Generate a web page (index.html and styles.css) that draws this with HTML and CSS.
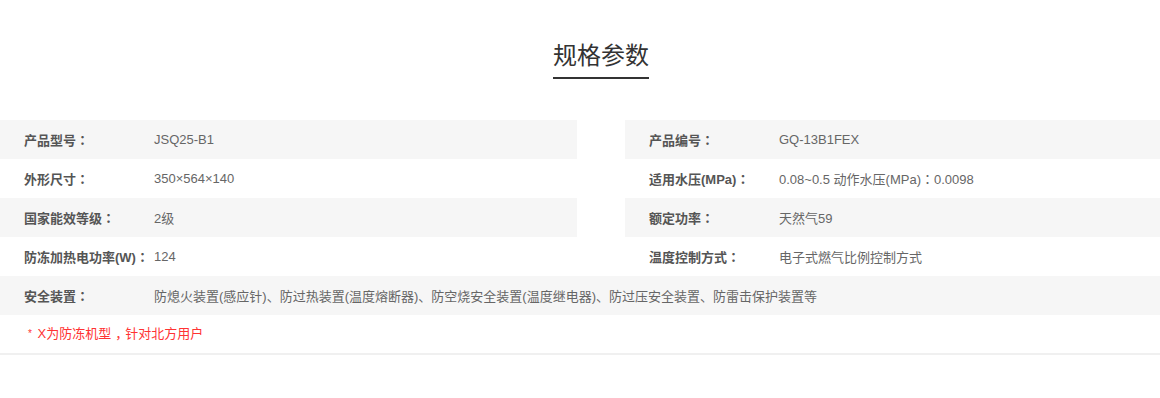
FILE: index.html
```html
<!DOCTYPE html>
<html lang="zh-CN">
<head>
    <meta charset="UTF-8">
    <meta name="viewport" content="width=device-width, initial-scale=1.0">
    <title>规格参数</title>
    <link rel="stylesheet" href="styles.css">
</head>
<body>
    <div class="spec">
        <div class="spec-head">
            <h2 class="spec-title">规格参数</h2>
        </div>

        <!-- 参数表 -->
        <div class="spec-table">
            <div class="spec-row shade">
                <div class="spec-cell left"><span class="label">产品型号<i class="p" lang="zh-TW">：</i></span><span class="value">JSQ25-B1</span></div>
                <div class="spec-cell right"><span class="label">产品编号<i class="p" lang="zh-TW">：</i></span><span class="value">GQ-13B1FEX</span></div>
            </div>
            <div class="spec-row">
                <div class="spec-cell left"><span class="label">外形尺寸<i class="p" lang="zh-TW">：</i></span><span class="value">350×564×140</span></div>
                <div class="spec-cell right"><span class="label">适用水压(MPa)<i class="p" lang="zh-TW">：</i></span><span class="value">0.08~0.5 动作水压(MPa)<i class="p" lang="zh-TW">：</i>0.0098</span></div>
            </div>
            <div class="spec-row shade">
                <div class="spec-cell left"><span class="label">国家能效等级<i class="p" lang="zh-TW">：</i></span><span class="value">2级</span></div>
                <div class="spec-cell right"><span class="label">额定功率<i class="p" lang="zh-TW">：</i></span><span class="value">天然气59</span></div>
            </div>
            <div class="spec-row">
                <div class="spec-cell left"><span class="label">防冻加热电功率(W)<i class="p" lang="zh-TW">：</i></span><span class="value">124</span></div>
                <div class="spec-cell right"><span class="label">温度控制方式<i class="p" lang="zh-TW">：</i></span><span class="value">电子式燃气比例控制方式</span></div>
            </div>
            <div class="spec-row shade">
                <div class="spec-cell full"><span class="label">安全装置<i class="p" lang="zh-TW">：</i></span><span class="value">防熄火装置(感应针)、防过热装置(温度熔断器)、防空烧安全装置(温度继电器)、防过压安全装置、防雷击保护装置等</span></div>
            </div>
        </div>

        <p class="spec-note"><span class="star">*</span> X为防冻机型<i class="comma">，</i>针对北方用户</p>
    </div>
</body>
</html>
```

FILE: styles.css
```css
body { margin: 0; padding: 0; background: #fff; font-family: "Liberation Sans", "Noto Sans CJK SC", sans-serif; font-size: 13px; color: #666; }
.spec { width: 1160px; border-bottom: 2px solid #f0f0f0; }
.spec-head { text-align: center; padding-top: 37px; padding-left: 42px; }
.spec-title { display: inline-block; margin: 0; padding-bottom: 6px; font-size: 24px; line-height: 34px; font-weight: normal; color: #333; border-bottom: 2px solid #333; font-family: "Noto Sans CJK SC", sans-serif; }
.spec-table { margin-top: 41px; }
.spec-row { display: flex; gap: 48px; height: 39px; }
.spec-cell { display: flex; align-items: center; height: 39px; box-sizing: border-box; padding-left: 24px; }
.spec-cell.left { width: 577px; }
.spec-cell.right { width: 535px; }
.spec-cell.full { width: 1160px; }
.shade .spec-cell { background: #f6f6f6; }
.label { width: 130px; flex-shrink: 0; font-weight: bold; color: #555; white-space: nowrap; }
.value { color: #666; white-space: nowrap; }
/* centred full-width punctuation */
.p { font-style: normal; font-family: "Noto Sans CJK TC", sans-serif; }
.spec-note { margin: 0; height: 38px; line-height: 38px; padding-left: 28px; color: #f33; }
.spec-note .star { font-size: 10px; vertical-align: 1px; margin-right: 2px; }
.spec-note .comma { font-style: normal; margin-left: 4px; letter-spacing: -3px; }
```
